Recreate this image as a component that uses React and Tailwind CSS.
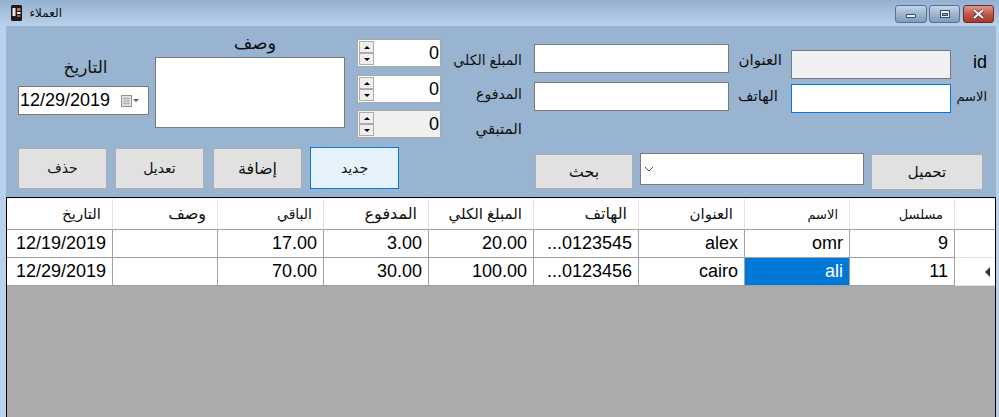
const rowGrid = 'grid grid-cols-[106px_105px_106px_105px_105px_105px_106px_105px_105px_40px]';

const headers = [
  ['التاريخ', 'text-[15px]'],
  ['وصف', 'text-[16px]'],
  ['الباقي', 'text-[14px]'],
  ['المدفوع', 'text-[16px]'],
  ['المبلغ الكلي', 'text-[15px]'],
  ['الهاتف', 'text-[16px]'],
  ['العنوان', 'text-[15px]'],
  ['الاسم', 'text-[13px]'],
  ['مسلسل', 'text-[13px]'],
];

const rows = [
  ['12/19/2019', '', '17.00', '3.00', '20.00', '...0123545', 'alex', 'omr', '9'],
  ['12/29/2019', '', '70.00', '30.00', '100.00', '...0123456', 'cairo', 'ali', '11'],
];

function Ar({ children, className = '' }) {
  return <span dir="rtl" className={`font-['Liberation_Sans','DejaVu_Sans',sans-serif] whitespace-nowrap text-[#111] ${className}`}>{children}</span>;
}

function AppIcon() {
  return (
    <svg width="11" height="16" viewBox="0 0 11 16" className="ml-[11px] shrink-0">
      <rect x="0" y="0" width="11" height="16" rx="1.5" fill="#1a1a1a" />
      <rect x="1.5" y="3" width="3" height="8" fill="#e8e8e8" />
      <rect x="6" y="3" width="3.5" height="3" fill="#e2702a" />
      <rect x="6" y="7" width="3.5" height="2" fill="#f2f2f2" />
      <rect x="6" y="10" width="3.5" height="2" fill="#c9541d" />
    </svg>
  );
}

function WindowButtons() {
  return (
    <div className="flex gap-[2px] mr-[5px] mt-[5px] self-start">
      <div className="w-[32px] h-[18px] rounded-[3px] border border-[#5a708c] bg-gradient-to-b from-[#c4d6ea] via-[#9db6d2] to-[#7e9cbf] flex items-end justify-center pb-[4px]">
        <div className="w-[10px] h-[4px] bg-[#f2f2f2] border border-[#39495e] rounded-[1px]" />
      </div>
      <div className="w-[31px] h-[18px] rounded-[3px] border border-[#5a708c] bg-gradient-to-b from-[#c4d6ea] via-[#9db6d2] to-[#7e9cbf] flex items-center justify-center">
        <div className="w-[10px] h-[8px] bg-[#e8eef5] border border-[#39495e] flex items-center justify-center">
          <div className="w-[6px] h-[3px] bg-[#8ea7c4] border border-[#39495e]" />
        </div>
      </div>
      <div className="ml-[1px] w-[31px] h-[18px] rounded-[3px] border border-[#6b2a25] bg-gradient-to-b from-[#dd9a8f] via-[#c4574a] to-[#a8362b] flex items-center justify-center">
        <svg width="13" height="10" viewBox="0 0 13 10">
          <path d="M2 1 L11 9 M11 1 L2 9" stroke="#39303a" strokeWidth="3.4" />
          <path d="M2 1 L11 9 M11 1 L2 9" stroke="#f4f4f4" strokeWidth="2.2" />
        </svg>
      </div>
    </div>
  );
}

function Spinner({ disabled, className = '' }) {
  return (
    <div className={`w-[84px] h-[28px] border border-[#a9a9a9] flex ${disabled ? 'bg-[#f0f0f0]' : 'bg-white'} ${className}`}>
      <div className="w-[15px] ml-[1px] mt-[1px] flex flex-col shrink-0">
        <div className="h-[12px] border border-[#adadad] bg-[#efefef] flex items-center justify-center">
          <div className="w-0 h-0 border-x-[3px] border-x-transparent border-b-[3px] border-b-black" />
        </div>
        <div className="h-[12px] border border-[#adadad] bg-[#efefef] flex items-center justify-center">
          <div className="w-0 h-0 border-x-[3px] border-x-transparent border-t-[3px] border-t-black" />
        </div>
      </div>
      <div className="flex-1 text-right pr-[1px] text-[18px] leading-[26px] text-black">0</div>
    </div>
  );
}

function FormButton({ children, className = '', text = 'text-[15px]' }) {
  return (
    <div className={`border border-[#adadad] bg-[#e1e1e1] flex items-center justify-center ${className}`}>
      <Ar className={text}>{children}</Ar>
    </div>
  );
}

export default function App() {
  return (
    <div className="w-[999px] h-[417px] overflow-hidden flex flex-col bg-[#b9d1ea] font-['Liberation_Sans',sans-serif] text-black">
      <div className="h-[26px] shrink-0 flex items-center bg-gradient-to-b from-[#95b0d1] to-[#b9d1ea]">
        <AppIcon />
        <Ar className="ml-[7px] text-[12px] w-[33px]">العملاء</Ar>
        <div className="flex-1" />
        <WindowButtons />
      </div>

      <div className="flex-1 min-h-0 ml-[6px] mr-[3px] flex flex-col bg-[#99b4d1]">
        <div className="h-[114px] shrink-0 flex items-start">
          <div className="ml-[12px] w-[131px] flex flex-col items-center">
            <Ar className="mt-[30px] ml-[4px] h-[30px] text-[17px] leading-[24px]">التاريخ</Ar>
            <div className="w-[131px] h-[29px] bg-white border border-[#7a7a7a] flex items-center">
              <span className="ml-[1px] text-[18px] leading-[27px]">12/29/2019</span>
              <svg width="18" height="12" viewBox="0 0 18 12" className="ml-[11px] shrink-0">
                <rect x="0.5" y="0.5" width="10" height="11" fill="#e4e4e4" stroke="#8f8f8f" />
                <path d="M2 3.5H9M2 6H9M2 8.5H9M4 2V10M7 2V10" stroke="#a8a8a8" strokeWidth="0.8" />
                <path d="M12 4H18L15 7Z" fill="#4d6185" />
              </svg>
            </div>
          </div>

          <div className="ml-[6px] w-[190px] flex flex-col items-center">
            <Ar className="mt-[5px] ml-[10px] h-[26px] text-[18px] leading-[24px]">وصف</Ar>
            <div className="w-[190px] h-[71px] bg-white border border-[#7a7a7a]" />
          </div>

          <div className="ml-[12px] mt-[13px] flex flex-col">
            <Spinner />
            <Spinner className="mt-[8px]" />
            <Spinner disabled className="mt-[7px]" />
          </div>

          <div className="ml-[10px] w-[71px] mt-[22px] flex flex-col items-end">
            <div className="h-[34px] leading-[24px]"><Ar className="text-[14px]">المبلغ الكلي</Ar></div>
            <div className="h-[35px] leading-[24px]"><Ar className="text-[14px]">المدفوع</Ar></div>
            <div className="h-[24px] leading-[24px]"><Ar className="text-[15px]">المتبقي</Ar></div>
          </div>

          <div className="ml-[12px] mt-[18px] flex flex-col gap-[9px]">
            <div className="w-[195px] h-[29px] bg-white border border-[#7a7a7a]" />
            <div className="w-[195px] h-[29px] bg-white border border-[#7a7a7a]" />
          </div>

          <div className="ml-[7px] w-[46px] mt-[22px] flex flex-col items-end">
            <div className="h-[36px] leading-[24px]"><Ar className="text-[15px]">العنوان</Ar></div>
            <div className="h-[24px] leading-[24px] mr-[4px]"><Ar className="text-[15px]">الهاتف</Ar></div>
          </div>

          <div className="ml-[9px] mt-[24px] flex flex-col gap-[5px]">
            <div className="w-[160px] h-[29px] bg-[#f0f0f0] border border-[#7a7a7a]" />
            <div className="w-[160px] h-[29px] bg-white border border-[#0078d7]" />
          </div>

          <div className="w-[36px] mt-[23px] flex flex-col items-end">
            <div className="h-[35px] text-[18px] leading-[27px]">id</div>
            <div className="leading-[24px]"><Ar className="text-[13px]">الاسم</Ar></div>
          </div>
        </div>

        <div className="h-[57px] shrink-0 flex items-start">
          <FormButton className="ml-[12px] mt-[8px] w-[89px] h-[41px]" text="text-[14px]">حذف</FormButton>
          <FormButton className="ml-[8px] mt-[8px] w-[89px] h-[41px]" text="text-[14px]">تعديل</FormButton>
          <FormButton className="ml-[9px] mt-[8px] w-[89px] h-[41px]" text="text-[16px]">إضافة</FormButton>
          <div className="ml-[8px] mt-[7px] w-[89px] h-[42px] border border-[#0078d7] bg-[#e5f1fb] flex items-center justify-center">
            <Ar className="text-[14px]">جديد</Ar>
          </div>
          <FormButton className="ml-[136px] mt-[14px] w-[98px] h-[35px]" text="text-[16px]">بحث</FormButton>
          <div className="ml-[7px] mt-[13px] w-[224px] h-[32px] bg-white border border-[#7a7a7a] flex items-center">
            <svg width="10" height="6" viewBox="0 0 10 6" className="ml-[3px]">
              <path d="M1 1L5 5L9 1" fill="none" stroke="#555" />
            </svg>
          </div>
          <FormButton className="ml-[7px] mt-[14px] w-[112px] h-[36px]" text="text-[15px]">تحميل</FormButton>
        </div>

        <div className="flex-1 min-h-0 border-l border-t border-r border-black bg-[#ababab]">
          <div className={`${rowGrid} h-[32px] bg-white border-t border-[#f4f4f4]`}>
            {headers.map(([h, size], i) => (
              <div key={i} className="border-r border-b border-r-[#e4e4e4] border-b-[#a0a0a0] text-right pr-[11px] pt-[3px] leading-[24px]">
                <Ar className={size}>{h}</Ar>
              </div>
            ))}
            <div className="border-b border-[#a0a0a0]" />
          </div>
          {rows.map((row, r) => (
            <div key={r} className={`${rowGrid} h-[28px] bg-white`}>
              {row.map((cell, c) => {
                const selected = r === 1 && c === 7;
                return (
                  <div
                    key={c}
                    className={`border-r border-b border-[#a0a0a0] text-right pr-[6px] text-[18px] leading-[27px] whitespace-nowrap ${selected ? 'bg-[#0078d7] text-white' : ''}`}
                  >
                    {cell}
                  </div>
                );
              })}
              <div className="border-b border-[#e4e4e4] flex items-center justify-end pr-[5px]">
                {r === 1 && <div className="w-0 h-0 border-y-[5px] border-y-transparent border-r-[5px] border-r-[#333]" />}
              </div>
            </div>
          ))}
        </div>
      </div>
    </div>
  );
}
